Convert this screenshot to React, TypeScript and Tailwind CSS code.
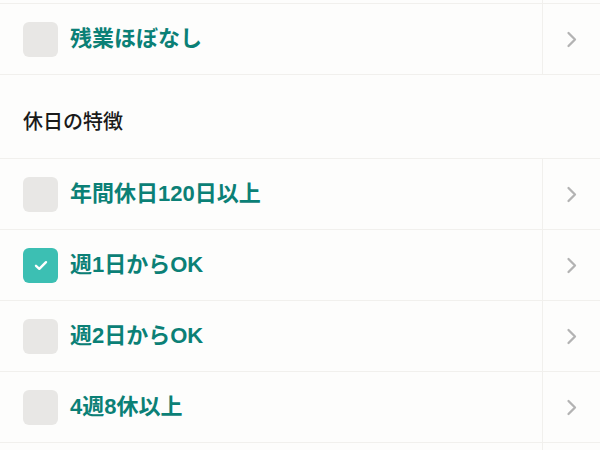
import React from 'react';

type Item = { label: string; checked?: boolean };

const Chevron: React.FC = () => (
  <svg width="12" height="17" viewBox="0 0 12 17" fill="none">
    <path d="M2.5 2 L9 8.5 L2.5 15" stroke="#b3b3b3" strokeWidth="2.3" strokeLinecap="round" strokeLinejoin="round" />
  </svg>
);

const Checkbox: React.FC<{ checked?: boolean }> = ({ checked }) =>
  checked ? (
    <div className="w-[35px] h-[35px] rounded-[6px] bg-[#3cbfb3] flex items-center justify-center shrink-0">
      <svg width="14" height="11" viewBox="0 0 14 11" fill="none">
        <path d="M2 5.8 L5.3 8.8 L12 2.2" stroke="#ffffff" strokeWidth="2.4" strokeLinecap="round" strokeLinejoin="round" />
      </svg>
    </div>
  ) : (
    <div className="w-[35px] h-[35px] rounded-[6px] bg-[#e8e7e5] shrink-0" />
  );

const Row: React.FC<Item> = ({ label, checked }) => (
  <div className="flex h-[71px] border-b border-[#f1f0ed]">
    <div className="flex-1 flex items-center pl-[23px] gap-[12px]">
      <Checkbox checked={checked} />
      <span className="text-[22px] font-bold text-[#0b8076] leading-none">{label}</span>
    </div>
    <div className="w-[58px] border-l border-[#f1f0ed] flex items-center justify-center">
      <Chevron />
    </div>
  </div>
);

export default function App() {
  const holidays: Item[] = [
    { label: '年間休日120日以上' },
    { label: '週1日からOK', checked: true },
    { label: '週2日からOK' },
    { label: '4週8休以上' },
  ];

  return (
    <div
      className="w-[600px] h-[450px] overflow-hidden bg-[#fdfdfc]"
      style={{ fontFamily: '"Liberation Sans", "Noto Sans CJK JP", sans-serif' }}
    >
      <div className="flex h-[4px] border-b border-[#f1f0ed]">
        <div className="flex-1" />
        <div className="w-[58px] border-l border-[#f1f0ed]" />
      </div>
      <Row label="残業ほぼなし" />
      <div className="h-[84px] border-b border-[#f1f0ed] pl-[23px] pt-[33px]">
        <h3 className="text-[20px] leading-[28px] font-medium text-[#1a1a1a]">休日の特徴</h3>
      </div>
      {holidays.map((h) => (
        <Row key={h.label} label={h.label} checked={h.checked} />
      ))}
      <div className="flex h-[20px]">
        <div className="flex-1" />
        <div className="w-[58px] border-l border-[#f1f0ed]" />
      </div>
    </div>
  );
}
